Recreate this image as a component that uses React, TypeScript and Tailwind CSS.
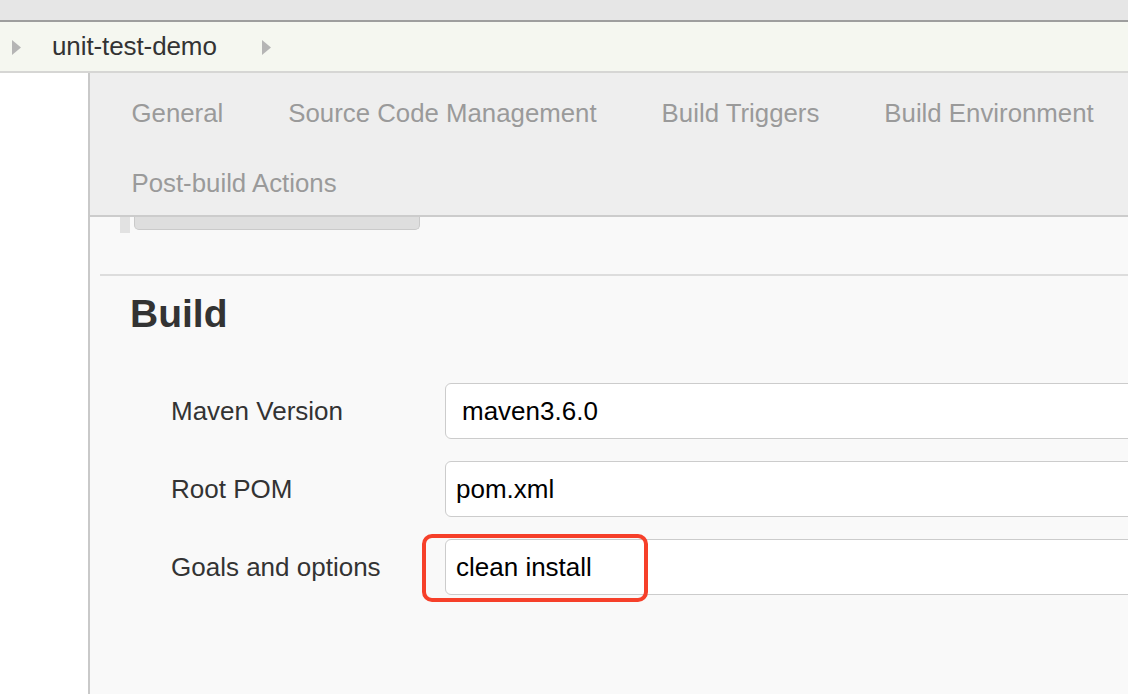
const tabsRowOne = ["General", "Source Code Management", "Build Triggers", "Build Environment"];

const fields = [
  { label: "Maven Version", value: "maven3.6.0", pad: "pl-[16px]", marked: false },
  { label: "Root POM", value: "pom.xml", pad: "pl-[10px]", marked: false },
  { label: "Goals and options", value: "clean install", pad: "pl-[10px]", marked: true },
];

const Arrow = ({ className }: { className?: string }) => (
  <svg className={className} width="9" height="15" viewBox="0 0 9 15">
    <polygon points="0,0 9,7.5 0,15" fill="#b5b5b5" />
  </svg>
);

export default function App() {
  return (
    <div className="w-[1128px] h-[694px] overflow-hidden bg-white font-['Liberation_Sans',Arial,sans-serif]">
      <div className="h-[22px] bg-[#e6e6e6] border-b-2 border-[#9e9e9e]" />
      <div className="h-[51px] bg-[#f5f7f0] border-b-2 border-[#d6d6d4] flex items-center">
        <Arrow className="ml-[12px] mt-[2px]" />
        <span className="ml-[31px] text-[26px] text-[#333] tracking-[-0.1px]">unit-test-demo</span>
        <Arrow className="ml-[45px] mt-[2px]" />
      </div>
      <div className="flex h-[621px]">
        <div className="w-[90px] shrink-0 bg-white border-r-2 border-[#c9c9c9]" />
        <div className="flex-1 bg-[#f9f9f9] overflow-hidden">
          <div className="h-[144px] bg-[#eeeeee] border-b-2 border-[#cccccc] pt-[5px] pl-[9px] text-[25.8px] text-[#9a9a9a]">
            <div className="flex h-[70px] items-center">
              {tabsRowOne.map((t) => (
                <div key={t} className="px-[32.5px] whitespace-nowrap">
                  {t}
                </div>
              ))}
            </div>
            <div className="flex h-[70px] items-center">
              <div className="px-[32.5px] whitespace-nowrap">Post-build Actions</div>
            </div>
          </div>
          <div className="flex h-[16px] items-start pl-[30px]">
            <div className="w-[10px] h-[16px] bg-[#e2e2e2]" />
            <div className="ml-[4px] w-[286px] h-[13px] bg-[#dedede] border border-t-0 border-[#cacaca] rounded-b-[5px]" />
          </div>
          <div className="ml-[10px] mt-[41px] border-t-2 border-[#dddddd]">
            <h2 className="pl-[30px] pt-[16px] text-[39px] font-bold text-[#333] leading-[44px]">Build</h2>
            <div className="mt-[47px] flex flex-col gap-[22px]">
              {fields.map((f) => (
                <div key={f.label} className="flex items-center">
                  <div className="w-[345px] pl-[71px] text-[26px] text-[#333] shrink-0">{f.label}</div>
                  <div className="relative">
                    <div
                      className={`w-[720px] h-[56px] bg-white border-[1.5px] border-[#cccccc] rounded-[6px] flex items-center ${f.pad} text-[26px] text-black`}
                    >
                      {f.value}
                    </div>
                    {f.marked && (
                      <div className="absolute left-[-23px] top-[-5px] w-[226px] h-[68px] border-[4px] border-[#f6402a] rounded-[10px]" />
                    )}
                  </div>
                </div>
              ))}
            </div>
          </div>
        </div>
      </div>
    </div>
  );
}
